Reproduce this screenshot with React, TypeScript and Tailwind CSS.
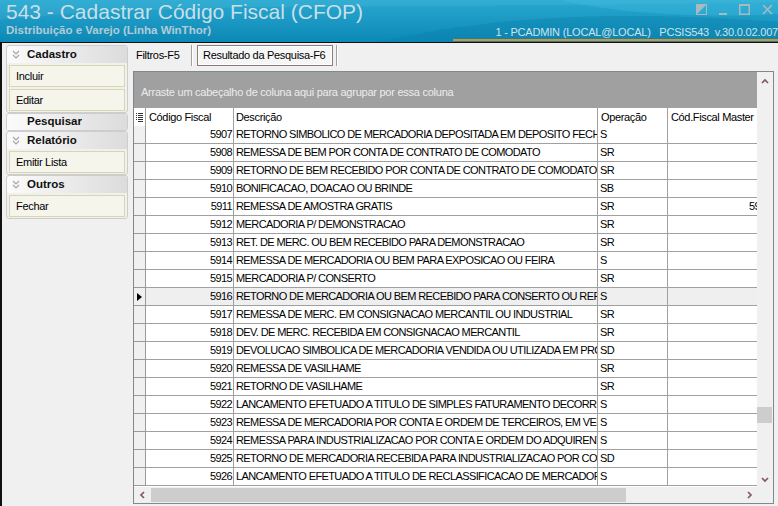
const rows: [string, string, string, string][] = [
  ["5907", "RETORNO SIMBOLICO DE MERCADORIA DEPOSITADA EM DEPOSITO FECHADO", "S", ""],
  ["5908", "REMESSA DE BEM POR CONTA DE CONTRATO DE COMODATO", "SR", ""],
  ["5909", "RETORNO DE BEM RECEBIDO POR CONTA DE CONTRATO DE COMODATO", "SR", ""],
  ["5910", "BONIFICACAO, DOACAO OU BRINDE", "SB", ""],
  ["5911", "REMESSA DE AMOSTRA GRATIS", "SR", "5949"],
  ["5912", "MERCADORIA P/ DEMONSTRACAO", "SR", ""],
  ["5913", "RET. DE MERC. OU BEM RECEBIDO PARA DEMONSTRACAO", "SR", ""],
  ["5914", "REMESSA DE MERCADORIA OU BEM PARA EXPOSICAO OU FEIRA", "S", ""],
  ["5915", "MERCADORIA P/ CONSERTO", "SR", ""],
  ["5916", "RETORNO DE MERCADORIA OU BEM RECEBIDO PARA CONSERTO OU REPARO", "S", ""],
  ["5917", "REMESSA DE MERC. EM CONSIGNACAO MERCANTIL OU INDUSTRIAL", "SR", ""],
  ["5918", "DEV. DE MERC. RECEBIDA EM CONSIGNACAO MERCANTIL", "SR", ""],
  ["5919", "DEVOLUCAO SIMBOLICA DE MERCADORIA VENDIDA OU UTILIZADA EM PROCESSO", "SD", ""],
  ["5920", "REMESSA DE VASILHAME", "SR", ""],
  ["5921", "RETORNO DE VASILHAME", "SR", ""],
  ["5922", "LANCAMENTO EFETUADO A TITULO DE SIMPLES FATURAMENTO DECORRENTE", "S", ""],
  ["5923", "REMESSA DE MERCADORIA POR CONTA E ORDEM DE TERCEIROS, EM VENDA", "S", ""],
  ["5924", "REMESSA PARA INDUSTRIALIZACAO POR CONTA E ORDEM DO ADQUIRENTE", "S", ""],
  ["5925", "RETORNO DE MERCADORIA RECEBIDA PARA INDUSTRIALIZACAO POR CONTA", "SD", ""],
  ["5926", "LANCAMENTO EFETUADO A TITULO DE RECLASSIFICACAO DE MERCADORIA", "S", ""],
];

function DoubleChevron() {
  return (
    <svg width="8" height="9" viewBox="0 0 8 9" fill="none" stroke="#a6a6a6" strokeWidth="1.2">
      <path d="M1 1 L4 4 L7 1" />
      <path d="M1 5 L4 8 L7 5" />
    </svg>
  );
}

function Group({ title, items, chevron = true }: { title: string; items: string[]; chevron?: boolean }) {
  return (
    <div className="rounded-[3px] border border-[#cdcdcd] bg-[#f0f0f0]">
      <div
        className={`${chevron ? "h-[17px]" : "h-[16px]"} flex items-center gap-[4px] pl-[5px] rounded-t-[3px] bg-gradient-to-r from-[#fbfbfb] to-[#dcdcdc] font-bold text-[11.5px] text-[#111]`}
      >
        <span className="w-[8px] flex justify-center">{chevron && <DoubleChevron />}</span>
        <span className="pl-[3px]">{title}</span>
      </div>
      {items.length > 0 && (
        <div className="flex flex-col gap-[2px] pt-[2px] pb-[1px] px-[2px]">
          {items.map((it) => (
            <div key={it} className="h-[22px] flex items-center pl-[6px] bg-[#f5f5ec] border border-[#d9d5ac] text-[11px] tracking-[-0.3px]">
              {it}
            </div>
          ))}
        </div>
      )}
    </div>
  );
}

function WinIcons() {
  return (
    <div className="flex items-start gap-[12px] pr-[5px] h-[12px]">
      <svg width="11" height="11" viewBox="0 0 11 11">
        <rect x="0.5" y="0.5" width="10" height="10" fill="none" stroke="#a7b9c1" />
        <path d="M0 0 H11 L0 11 Z" fill="#a7b9c1" />
      </svg>
      <svg width="8" height="11" viewBox="0 0 8 11">
        <rect x="0" y="9" width="8" height="2" fill="#a7b9c1" />
      </svg>
      <svg width="11" height="11" viewBox="0 0 11 11">
        <rect x="0.75" y="0.75" width="9.5" height="9.5" fill="none" stroke="#a7b9c1" strokeWidth="1.5" />
        <rect x="0" y="0" width="11" height="2" fill="#a7b9c1" />
      </svg>
      <svg width="11" height="11" viewBox="0 0 11 11" stroke="#a7b9c1" strokeWidth="1.6">
        <path d="M1 1 L10 10 M10 1 L1 10" />
      </svg>
    </div>
  );
}

function TitleBar() {
  return (
    <div className="relative h-[42px] overflow-hidden bg-gradient-to-b from-[#27a9d1] to-[#0b88b5] flex">
      <svg className="absolute inset-0" width="778" height="42" viewBox="0 0 778 42">
        <path d="M0 20 C 200 0, 420 10, 778 2 L778 0 L0 0 Z" fill="#ffffff" opacity="0.06" />
        <path d="M380 42 C 470 20, 600 8, 778 22 L778 42 Z" fill="#0a7eaa" opacity="0.35" />
        <path d="M560 0 C 620 14, 700 18, 778 14 L778 0 Z" fill="#46bde0" opacity="0.35" />
      </svg>
      <div className="relative pl-[6px] flex flex-col">
        <div className="text-[21px] leading-[24px] text-[#c9dfe8] whitespace-nowrap">543 - Cadastrar Código Fiscal (CFOP)</div>
        <div className="text-[11.5px] leading-[12px] font-bold text-[#b3cbd6] whitespace-nowrap">Distribuição e Varejo (Linha WinThor)</div>
      </div>
      <div className="relative flex-1 flex flex-col items-end pt-[4px]">
        <WinIcons />
        <div className="mt-[10px] w-[325px] h-[15px] border-b-2 border-[#e58e26] text-right text-[11px] leading-[13px] text-[#cfe2ea] whitespace-nowrap tracking-[-0.2px] overflow-hidden">
          1 - PCADMIN (LOCAL@LOCAL)&nbsp;&nbsp;&nbsp;PCSIS543&nbsp;&nbsp;v.30.0.02.007
        </div>
      </div>
    </div>
  );
}

function Arrow({ dir }: { dir: "up" | "down" | "left" | "right" }) {
  const d = {
    up: "M1 5 L4 2 L7 5",
    down: "M1 2 L4 5 L7 2",
    left: "M5 1 L2 4 L5 7",
    right: "M2 1 L5 4 L2 7",
  }[dir];
  const vert = dir === "up" || dir === "down";
  return (
    <svg width={vert ? 8 : 7} height={vert ? 7 : 8} viewBox={vert ? "0 0 8 7" : "0 0 7 8"} fill="none" stroke="#835959" strokeWidth="1.7">
      <path d={d} />
    </svg>
  );
}

function Grid() {
  return (
    <div className="flex-1 min-h-0 mr-[4px] mb-[2px] border border-[#828790] bg-[#f0f0f0] flex flex-col">
      <div className="flex flex-1 min-h-0">
        <div className="flex-1 min-w-0 overflow-hidden bg-white flex flex-col text-[11px]">
          <div className="h-[36px] shrink-0 bg-[#a0a0a0] flex items-center pl-[7px] pt-[5px] text-[#ececec] whitespace-nowrap tracking-[-0.25px]">
            Arraste um cabeçalho de coluna aqui para agrupar por essa coluna
          </div>
          <div className="h-[18px] shrink-0 flex whitespace-nowrap tracking-[-0.35px]">
            <div className="w-[12px] shrink-0 border-r border-[#a0a0a0] flex items-center justify-center">
              <svg width="7" height="9" viewBox="0 0 7 9" fill="#333">
                <rect x="0" y="0" width="1" height="1" />
                <rect x="2" y="0" width="5" height="1" />
                <rect x="0" y="2" width="1" height="1" />
                <rect x="2" y="2" width="5" height="1" />
                <rect x="0" y="4" width="1" height="1" />
                <rect x="2" y="4" width="5" height="1" />
                <rect x="0" y="6" width="1" height="1" />
                <rect x="2" y="6" width="5" height="1" />
                <rect x="2" y="8" width="5" height="1" />
              </svg>
            </div>
            <div className="w-[88px] shrink-0 border-r border-[#a0a0a0] pl-[3px] flex items-center">Código Fiscal</div>
            <div className="w-[364px] shrink-0 border-r border-[#a0a0a0] pl-[2px] flex items-center">Descrição</div>
            <div className="w-[70px] shrink-0 border-r border-[#a0a0a0] pl-[3px] flex items-center">Operação</div>
            <div className="w-[104px] shrink-0 pl-[3px] flex items-center">Cód.Fiscal Master</div>
          </div>
          {rows.map(([cod, desc, op, master]) => {
            const sel = cod === "5916";
            return (
              <div key={cod} className={`h-[18px] shrink-0 flex whitespace-nowrap tracking-[-0.6px] ${sel ? "bg-[#efefef]" : "bg-white"}`}>
                <div className="w-[12px] shrink-0 bg-[#f0f0f0] border-r border-b border-[#9a9a9a] flex items-center pl-[3px]">
                  {sel && (
                    <svg width="5" height="8" viewBox="0 0 5 8">
                      <path d="M0 0 L5 4 L0 8 Z" fill="#000" />
                    </svg>
                  )}
                </div>
                <div className="w-[88px] shrink-0 border-r border-b border-[#a0a0a0] pr-[1px] flex items-center justify-end">{cod}</div>
                <div className="w-[364px] shrink-0 border-r border-b border-[#a0a0a0] pl-[2px] flex items-center overflow-hidden">{desc}</div>
                <div className="w-[70px] shrink-0 border-r border-b border-[#a0a0a0] pl-[2px] flex items-center">{op}</div>
                <div className="w-[104px] shrink-0 border-b border-[#a0a0a0] pr-[1px] flex items-center justify-end">{master}</div>
              </div>
            );
          })}
        </div>
        <div className="w-[16px] shrink-0 bg-[#f0f0f0] flex flex-col">
          <div className="h-[16px] flex items-center justify-center pt-[2px]">
            <Arrow dir="up" />
          </div>
          <div className="flex-1">
            <div className="mt-[319px] h-[16px] w-[15px] bg-[#cdcdcd]" />
          </div>
          <div className="h-[16px] flex items-center justify-center">
            <Arrow dir="down" />
          </div>
        </div>
      </div>
      <div className="h-[16px] shrink-0 flex bg-[#f0f0f0]">
        <div className="w-[16px] flex items-center justify-center">
          <Arrow dir="left" />
        </div>
        <div className="flex-1 flex items-center">
          <div className="ml-[1px] w-[475px] h-[14px] bg-[#cdcdcd]" />
        </div>
        <div className="w-[16px] flex items-center justify-center">
          <Arrow dir="right" />
        </div>
        <div className="w-[16px]" />
      </div>
    </div>
  );
}

export default function App() {
  return (
    <div className="w-[778px] h-[506px] overflow-hidden bg-[#0c8ab6] font-['Liberation_Sans',Arial,sans-serif] text-black">
      <TitleBar />
      <div className="flex h-[464px] bg-[#f0f0f0] border-t border-l-2 border-[#111]">
        <div className="w-[131px] shrink-0 pl-[4px] pr-[5px] pt-[2px] flex flex-col">
          <Group title="Cadastro" items={["Incluir", "Editar"]} />
          <Group title="Pesquisar" items={[]} chevron={false} />
          <Group title="Relatório" items={["Emitir Lista"]} />
          <Group title="Outros" items={["Fechar"]} />
        </div>
        <div className="flex-1 min-w-0 flex flex-col">
          <div className="h-[28px] shrink-0 flex items-start pt-[2px] text-[11px] tracking-[-0.3px]">
            <div className="w-[58px] h-[21px] flex items-center pl-[3px] whitespace-nowrap">Filtros-F5</div>
            <div className="w-[2px] h-[21px] border-l border-[#a0a0a0] border-r border-r-white" />
            <div className="ml-[4px] w-[136px] h-[21px] border border-[#8c7a7a] bg-[#f6f6f6] flex items-center pl-[5px] whitespace-nowrap shadow-[inset_0_0_0_1px_#ffffff]">
              Resultado da Pesquisa-F6
            </div>
            <div className="ml-[3px] w-[2px] h-[21px] border-l border-[#a0a0a0] border-r border-r-white" />
          </div>
          <Grid />
        </div>
      </div>
    </div>
  );
}
